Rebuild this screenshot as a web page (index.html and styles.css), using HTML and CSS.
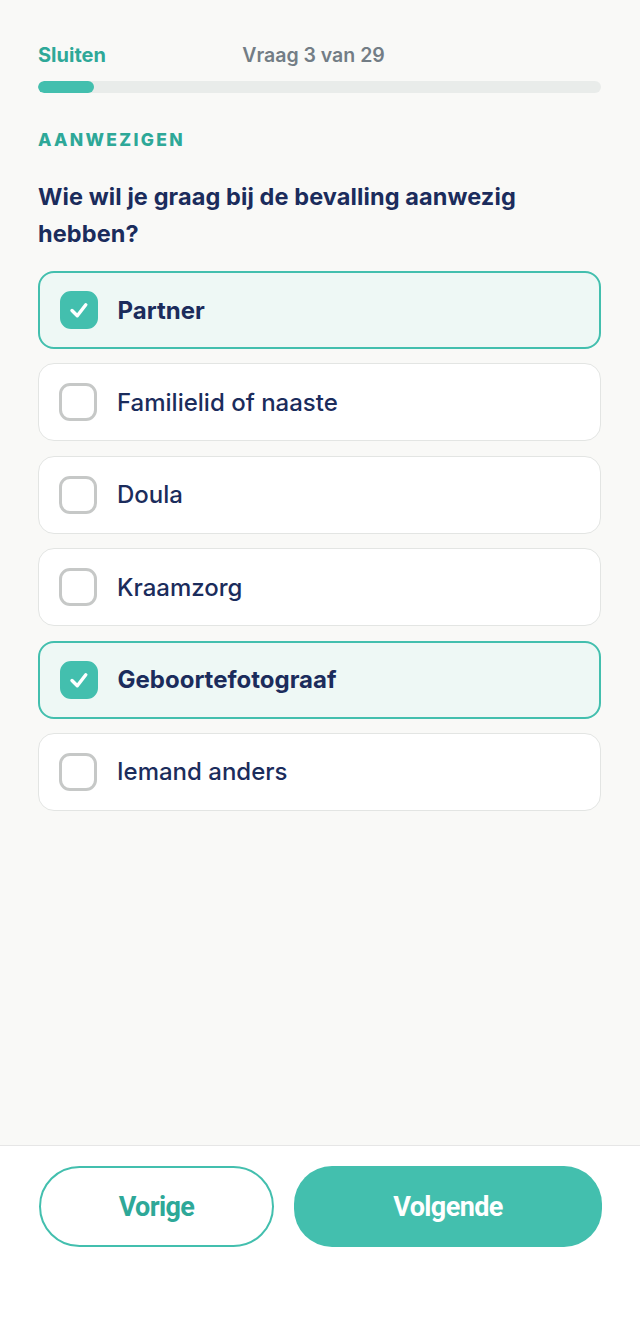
FILE: index.html
```html
<!DOCTYPE html>
<html lang="nl">
<head>
<meta charset="utf-8">
<title>Vraag 3 van 29</title>
<link rel="stylesheet" href="styles.css">
</head>
<body>
<div class="page">
  <main class="content">
    <header class="topbar">
      <a class="close" href="#">Sluiten</a>
      <span class="counter">Vraag 3 van 29</span>
      <span></span>
    </header>
    <div class="progress"><div class="progress-fill" style="width:56px"></div></div>
    <div class="section">AANWEZIGEN</div>
    <h1 class="question">Wie wil je graag bij de bevalling aanwezig hebben?</h1>
    <ul class="options">
      <li class="option selected">
        <span class="check"><svg viewBox="0 0 38 38" width="38" height="38"><path d="M12 19.5L17.3 24.8L25.8 13.8" fill="none" stroke="#fff" stroke-width="3.4" stroke-linecap="round" stroke-linejoin="round"/></svg></span>
        <span class="label">Partner</span>
      </li>
      <li class="option">
        <span class="check"></span>
        <span class="label">Familielid of naaste</span>
      </li>
      <li class="option">
        <span class="check"></span>
        <span class="label">Doula</span>
      </li>
      <li class="option">
        <span class="check"></span>
        <span class="label">Kraamzorg</span>
      </li>
      <li class="option selected">
        <span class="check"><svg viewBox="0 0 38 38" width="38" height="38"><path d="M12 19.5L17.3 24.8L25.8 13.8" fill="none" stroke="#fff" stroke-width="3.4" stroke-linecap="round" stroke-linejoin="round"/></svg></span>
        <span class="label">Geboortefotograaf</span>
      </li>
      <li class="option">
        <span class="check"></span>
        <span class="label">Iemand anders</span>
      </li>
    </ul>
  </main>
  <footer class="footer">
    <button class="btn btn-outline">Vorige</button>
    <button class="btn btn-primary">Volgende</button>
  </footer>
</div>
</body>
</html>
```

FILE: styles.css
```css
* { box-sizing: border-box; }
html, body { margin: 0; padding: 0; }
body {
  font-family: Inter, "Noto Sans", sans-serif;
  background: #f9f9f7;
  color: #1b2c5c;
}
.page {
  display: flex;
  flex-direction: column;
  height: 1321px;
}
.content {
  flex: 1;
  padding: 43px 39px 0 38px;
  display: flex;
  flex-direction: column;
}
.topbar {
  display: grid;
  grid-template-columns: 1fr auto 1fr;
  align-items: center;
  height: 24px;
}
.close {
  color: #2ea898;
  font-weight: 700;
  font-size: 20px;
  text-decoration: none;
}
.counter {
  color: #737d85;
  font-weight: 600;
  font-size: 19.5px;
  margin-right: 12px;
}
.progress {
  margin-top: 14px;
  height: 12px;
  border-radius: 6px;
  background: #e9ecea;
  overflow: hidden;
}
.progress-fill {
  height: 100%;
  border-radius: 6px;
  background: #43bfae;
}
.section {
  margin-top: 36px;
  font-size: 17.5px;
  line-height: 22px;
  font-weight: 800;
  letter-spacing: 2.3px;
  color: #2ea898;
}
.question {
  margin: 27px 0 0;
  font-size: 23.5px;
  line-height: 37px;
  font-weight: 700;
  letter-spacing: 0.1px;
  color: #1b2c5c;
}
.options {
  list-style: none;
  margin: 19px 0 0;
  padding: 0;
  display: flex;
  flex-direction: column;
  gap: 14.4px;
}
.option {
  height: 78px;
  display: flex;
  align-items: center;
  gap: 20px;
  padding: 0 20px;
  background: #fff;
  border: 1.5px solid #e3e5e3;
  border-radius: 16px;
}
.option.selected {
  background: #eef8f5;
  border: 2px solid #43bfae;
  padding: 0 19.5px;
}
.check {
  width: 38px;
  height: 38px;
  flex: none;
  border-radius: 11px;
  border: 3px solid #c6c8c7;
  position: relative;
}
.check svg {
  position: absolute;
  left: -3px;
  top: -3px;
}
.option.selected .check {
  background: #43bfae;
  border-color: #43bfae;
}
.label {
  font-size: 24px;
  font-weight: 500;
  color: #1b2c5c;
}
.option.selected .label {
  font-weight: 700;
}
.footer {
  height: 176px;
  background: #fff;
  border-top: 1.5px solid #e6e6e6;
  padding: 20px 38px 0 39px;
  display: flex;
  gap: 20px;
  align-items: flex-start;
}
.btn {
  height: 81px;
  padding: 0;
  font-family: Roboto, "Liberation Sans", sans-serif;
  font-size: 27px;
  font-weight: 700;
  letter-spacing: -0.6px;
  cursor: pointer;
}
.btn-outline {
  width: 235px;
  flex: none;
  background: #fff;
  border: 2px solid #43bfae;
  border-radius: 41px;
  color: #2ea898;
}
.btn-primary {
  flex: 1;
  background: #43bfae;
  border: none;
  border-radius: 38px;
  color: #fff;
}
```
